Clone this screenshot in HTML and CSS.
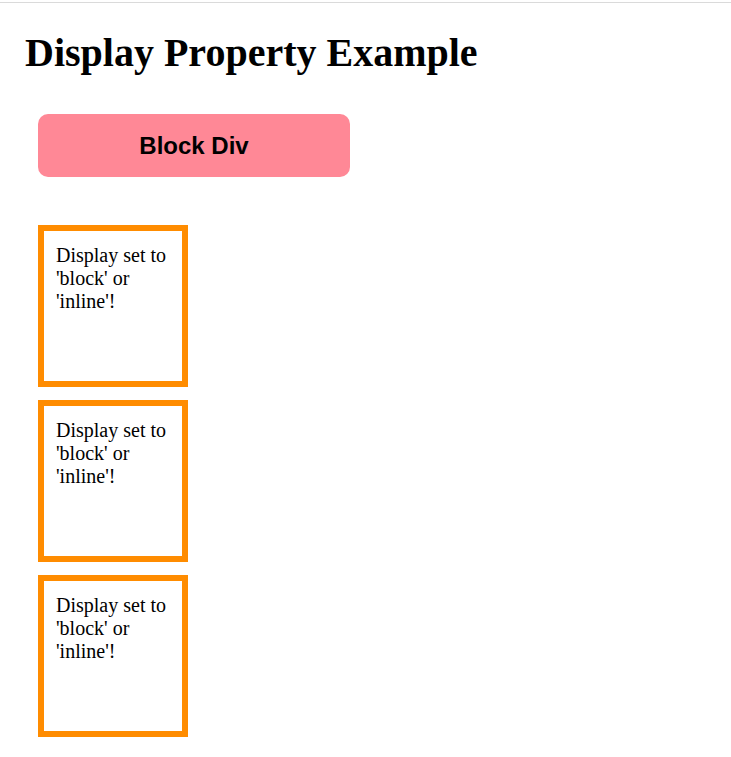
FILE: index.html
```html
<!DOCTYPE html>
<html>
<head>
<meta charset="utf-8">
<link rel="stylesheet" href="styles.css">
</head>
<body>
<div class="topline"></div>
<div class="page">
  <h1 class="title">Display Property Example</h1>
  <div class="block-div">Block Div</div>
  <div class="boxes">
    <div class="box">Display set to 'block' or 'inline'!</div>
    <div class="box">Display set to 'block' or 'inline'!</div>
    <div class="box">Display set to 'block' or 'inline'!</div>
  </div>
</div>
</body>
</html>
```
FILE: styles.css
```css
html, body {
  margin: 0;
  padding: 0;
  background: #ffffff;
}
body {
  font-family: "Liberation Serif", "Times New Roman", serif;
  color: #000;
}
.topline {
  height: 2px;
  border-bottom: 1px solid #dadada;
}
.page {
  padding: 0 25px;
}
.title {
  font-family: "Liberation Serif", serif;
  font-weight: bold;
  font-size: 40px;
  line-height: 46px;
  margin: 27px 0 0 0;
}
.block-div {
  margin: 38px 0 0 13px;
  width: 312px;
  height: 63px;
  border-radius: 10px;
  background: #ff8896;
  font-family: "Liberation Sans", Arial, sans-serif;
  font-weight: bold;
  font-size: 24px;
  display: flex;
  align-items: center;
  justify-content: center;
}
.boxes {
  display: flex;
  flex-direction: column;
  gap: 13px;
  margin: 48px 0 0 13px;
}
.box {
  box-sizing: border-box;
  width: 150px;
  height: 162px;
  border: 6px solid #ff8c00;
  padding: 13px 12px;
  font-size: 20px;
  line-height: 23px;
}
```
